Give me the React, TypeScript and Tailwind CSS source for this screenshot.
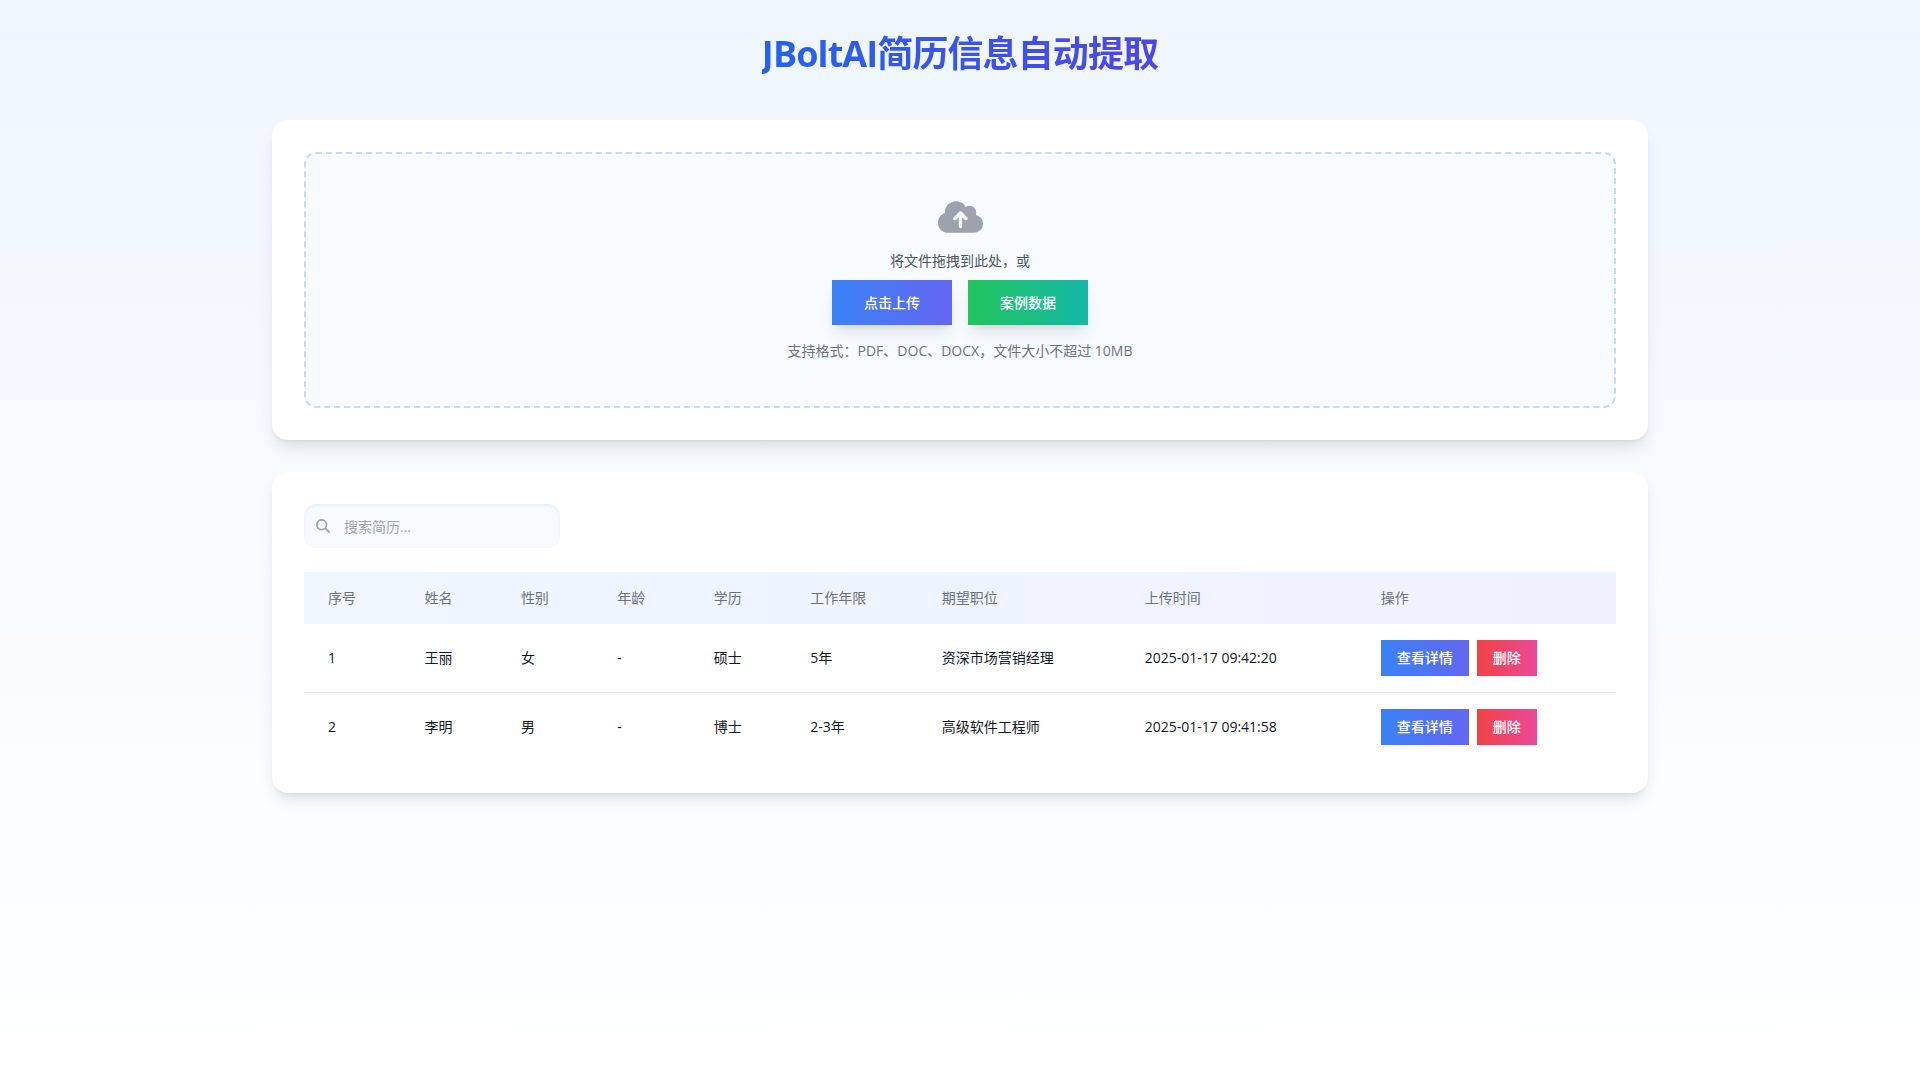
import React, { useState } from 'react'
import { FaCloudArrowUp, FaMagnifyingGlass } from 'react-icons/fa6'

interface Resume {
  id: number
  name: string
  gender: string
  age: string
  education: string
  experience: string
  position: string
  uploadedAt: string
}

const resumes: Resume[] = [
  {
    id: 1,
    name: '王丽',
    gender: '女',
    age: '-',
    education: '硕士',
    experience: '5年',
    position: '资深市场营销经理',
    uploadedAt: '2025-01-17 09:42:20',
  },
  {
    id: 2,
    name: '李明',
    gender: '男',
    age: '-',
    education: '博士',
    experience: '2-3年',
    position: '高级软件工程师',
    uploadedAt: '2025-01-17 09:41:58',
  },
]

const columns = [
  { label: '序号', width: 'w-[96px]' },
  { label: '姓名', width: 'w-[96px]' },
  { label: '性别', width: 'w-[96px]' },
  { label: '年龄', width: 'w-[96px]' },
  { label: '学历', width: 'w-[96px]' },
  { label: '工作年限', width: 'w-[131px]' },
  { label: '期望职位', width: 'w-[202px]' },
  { label: '上传时间', width: 'w-[235px]' },
  { label: '操作', width: 'w-[258px]' },
]

const UploadPanel: React.FC = () => (
  <section className="rounded-2xl bg-white p-8 shadow-lg">
    <div className="flex min-h-64 flex-col items-center rounded-xl border-2 border-dashed border-[#bfdbfe] bg-[#f7fbff] px-12 pt-[45px] pb-11">
      <FaCloudArrowUp className="h-9 w-[45px] text-[#9ca3af]" />
      <p className="mt-4 text-sm text-[#4b5563]">将文件拖拽到此处，或</p>
      <div className="mt-[9px] flex gap-4">
        <button
          type="button"
          className="h-[45px] bg-linear-to-r/srgb from-[#3b82f6] to-[#6366f1] px-8 text-sm font-medium text-white shadow-lg"
        >
          点击上传
        </button>
        <button
          type="button"
          className="h-[45px] bg-linear-to-r/srgb from-[#22c55e] to-[#14b8a6] px-8 text-sm font-medium text-white shadow-lg"
        >
          案例数据
        </button>
      </div>
      <p className="mt-4 text-sm text-[#6b7280]">支持格式：PDF、DOC、DOCX，文件大小不超过 10MB</p>
    </div>
  </section>
)

const ResumeTable: React.FC<{ rows: Resume[] }> = ({ rows }) => (
  <table className="w-full table-fixed text-left text-sm">
    <thead>
      <tr className="h-[52px] bg-linear-to-r/srgb from-[#eff6ff] to-[#eef2ff] text-[#6b7280]">
        {columns.map((column) => (
          <th key={column.label} scope="col" className={`px-6 font-normal ${column.width}`}>
            {column.label}
          </th>
        ))}
      </tr>
    </thead>
    <tbody className="divide-y divide-[#e5e7eb] text-[#111827]">
      {rows.map((row) => (
        <tr key={row.id}>
          <td className="px-6 py-4">{row.id}</td>
          <td className="px-6 py-4">{row.name}</td>
          <td className="px-6 py-4">{row.gender}</td>
          <td className="px-6 py-4">{row.age}</td>
          <td className="px-6 py-4">{row.education}</td>
          <td className="px-6 py-4">{row.experience}</td>
          <td className="px-6 py-4">{row.position}</td>
          <td className="px-6 py-4 whitespace-nowrap">{row.uploadedAt}</td>
          <td className="px-6 py-4">
            <div className="flex gap-2">
              <button
                type="button"
                className="bg-linear-to-r/srgb from-[#3b82f6] to-[#6366f1] px-4 py-2 font-medium text-white shadow-xs"
              >
                查看详情
              </button>
              <button
                type="button"
                className="bg-linear-to-r/srgb from-[#ef4444] to-[#ec4899] px-4 py-2 font-medium text-white shadow-xs"
              >
                删除
              </button>
            </div>
          </td>
        </tr>
      ))}
    </tbody>
  </table>
)

const App: React.FC = () => {
  const [keyword, setKeyword] = useState('')

  const rows = resumes.filter((resume) => resume.name.includes(keyword) || resume.position.includes(keyword))

  return (
    <div className="min-h-screen bg-linear-to-b/srgb from-[#eff6ff] to-white font-['Open_Sans','Noto_Sans_CJK_SC',sans-serif]">
      <main className="mx-auto max-w-[1440px] px-8 py-8">
        {/* Title */}
        <header className="mb-11 flex justify-center">
          <h1 className="bg-linear-to-r/srgb from-[#2563eb] to-[#4f46e5] bg-clip-text text-4xl leading-11 font-bold tracking-tight text-transparent">
            JBoltAI简历信息自动提取
          </h1>
        </header>

        <div className="flex flex-col gap-8">
          <UploadPanel />

          {/* Resume list */}
          <section className="rounded-2xl bg-white p-8 shadow-lg">
            <div className="relative mb-6 w-64">
              <FaMagnifyingGlass className="absolute top-[15px] left-3 size-[14px] text-[#9ca3af]" />
              <input
                type="text"
                aria-label="搜索简历"
                placeholder="搜索简历..."
                value={keyword}
                onChange={(e) => setKeyword(e.target.value)}
                className="block h-11 w-full rounded-xl bg-[#f7fbff] pr-4 pl-10 text-sm inset-shadow-sm outline-none placeholder:text-[#9ca3af]"
              />
            </div>
            <ResumeTable rows={rows} />
          </section>
        </div>
      </main>
    </div>
  )
}

export default App
